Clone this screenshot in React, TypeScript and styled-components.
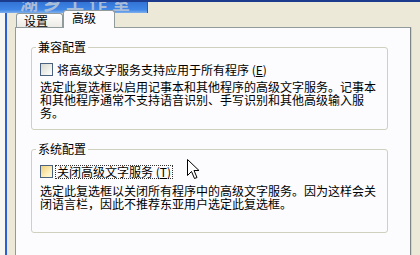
import React from "react";
import styled, { createGlobalStyle } from "styled-components";

const GlobalStyle = createGlobalStyle`
  body {
    margin: 0;
    background: #ece9d8;
  }
`;

const cjk = `"Noto Sans CJK SC", "Noto Sans", sans-serif`;

const Window = styled.div`
  position: relative;
  width: 420px;
  height: 255px;
  overflow: hidden;
  background: #ece9d8;
  border-top: 2px solid #1d3b8c;
  box-sizing: border-box;
  display: flex;
  font-family: ${cjk};
  font-size: 12px;
  color: #000;
`;

const LeftGap = styled.div`
  width: 5px;
  background: #f6f6f2;
`;

const Body = styled.div`
  flex: 1;
  display: flex;
  flex-direction: column;
  border-left: 2px solid #2b5fd6;
  padding: 8px 0 0 8px;
`;

const TabRow = styled.div`
  display: flex;
  align-items: flex-end;
  height: 18px;
  padding-left: 1px;
  margin-bottom: -1px;
  position: relative;
  z-index: 1;
`;

const Tab = styled.div<{ $active?: boolean }>`
  box-sizing: border-box;
  width: ${(p) => (p.$active ? 52 : 47)}px;
  height: ${(p) => (p.$active ? 18 : 14)}px;
  margin-bottom: ${(p) => (p.$active ? 0 : 1)}px;
  border: 1px solid #919b9c;
  border-bottom: none;
  border-radius: 3px 3px 0 0;
  background: ${(p) =>
    p.$active ? "#fcfcfe" : "linear-gradient(#fefefe, #ecebe5)"};
  padding-left: ${(p) => (p.$active ? 8 : 7)}px;
  line-height: ${(p) => (p.$active ? 14 : 13)}px;
`;

const Panel = styled.div`
  box-sizing: border-box;
  width: 396px;
  flex: 1;
  background: #fcfcfe;
  border: 1px solid #919b9c;
  border-right-color: #7d8687;
  border-bottom: none;
  box-shadow: 1px 0 0 #d6d3c6;
  padding: 12px 0 0 15px;
  display: flex;
  flex-direction: column;
  gap: 12px;
`;

const Group = styled.fieldset<{ $minHeight?: number }>`
  box-sizing: border-box;
  width: 357px;
  min-height: ${(p) => p.$minHeight ?? 0}px;
  margin: 0;
  padding: 0 8px 10px 8px;
  border: 1px solid #d0d0bf;
  border-radius: 3px;
  min-inline-size: 0;
`;

const Legend = styled.legend`
  padding: 0 2px;
  margin-left: -4px;
  line-height: 14px;
`;

const CheckRow = styled.div`
  display: flex;
  align-items: center;
  height: 15px;
  margin-top: 8px;
`;

const Box = styled.span<{ $hover?: boolean }>`
  box-sizing: border-box;
  width: 13px;
  height: 13px;
  margin-right: 2px;
  border: 1px solid #4a6180;
  background: ${(p) =>
    p.$hover
      ? "linear-gradient(135deg, #efcf7c, #fff2c4 70%, #fff8de)"
      : "linear-gradient(135deg, #d8d8d0, #f4f4f0 70%, #ffffff)"};
`;

const Label = styled.span<{ $focus?: boolean }>`
  border: 1px dotted ${(p) => (p.$focus ? "#333" : "transparent")};
  padding: 0 1px;
  line-height: 12px;
  white-space: nowrap;
`;

const Desc = styled.p<{ $top: number }>`
  margin: ${(p) => p.$top}px 0 0 0;
  line-height: 13px;
  white-space: nowrap;
`;

const Watermark = styled.div`
  position: absolute;
  top: -2px;
  left: 0;
  width: 148px;
  height: 13px;
  overflow: hidden;
  background: linear-gradient(#2f6fd2, #3f86e6 75%, #7fb0ee);
  border-right: 1px solid #2458b8;
  color: #a9bcd8;
  font-family: ${cjk};
  font-weight: bold;
  font-size: 18px;
  letter-spacing: 5px;
  line-height: 18px;
  padding-left: 20px;
  box-sizing: border-box;
  white-space: nowrap;
`;

const WaterText = styled.span`
  display: block;
  margin-top: -7px;
`;

const Cursor = styled.svg`
  position: absolute;
  left: 187px;
  top: 157px;
`;

export default function App() {
  return (
    <>
      <GlobalStyle />
      <Window>
        <LeftGap />
        <Body>
          <TabRow>
            <Tab>设置</Tab>
            <Tab $active>高级</Tab>
          </TabRow>
          <Panel>
            <Group>
              <Legend>兼容配置</Legend>
              <CheckRow>
                <Box />
                <Label>
                  将高级文字服务支持应用于所有程序 (<u>E</u>)
                </Label>
              </CheckRow>
              <Desc $top={3}>
                选定此复选框以启用记事本和其他程序的高级文字服务。记事本
                <br />
                和其他程序通常不支持语音识别、手写识别和其他高级输入服
                <br />
                务。
              </Desc>
            </Group>
            <Group $minHeight={91}>
              <Legend>系统配置</Legend>
              <CheckRow>
                <Box $hover />
                <Label $focus>
                  关闭高级文字服务 (<u>T</u>)
                </Label>
              </CheckRow>
              <Desc $top={5}>
                选定此复选框以关闭所有程序中的高级文字服务。因为这样会关
                <br />
                闭语言栏，因此不推荐东亚用户选定此复选框。
              </Desc>
            </Group>
          </Panel>
        </Body>
        <Watermark>
          <WaterText>湖乡工作室</WaterText>
        </Watermark>
        <Cursor width="13" height="21" viewBox="0 0 13 21">
          <path
            d="M0.5 0.5 L0.5 16.5 L4.5 12.5 L7.5 19.5 L10 18.5 L7 11.5 L12 11.5 Z"
            fill="#fff"
            stroke="#000"
            strokeWidth="1"
            strokeLinejoin="miter"
          />
        </Cursor>
      </Window>
    </>
  );
}
